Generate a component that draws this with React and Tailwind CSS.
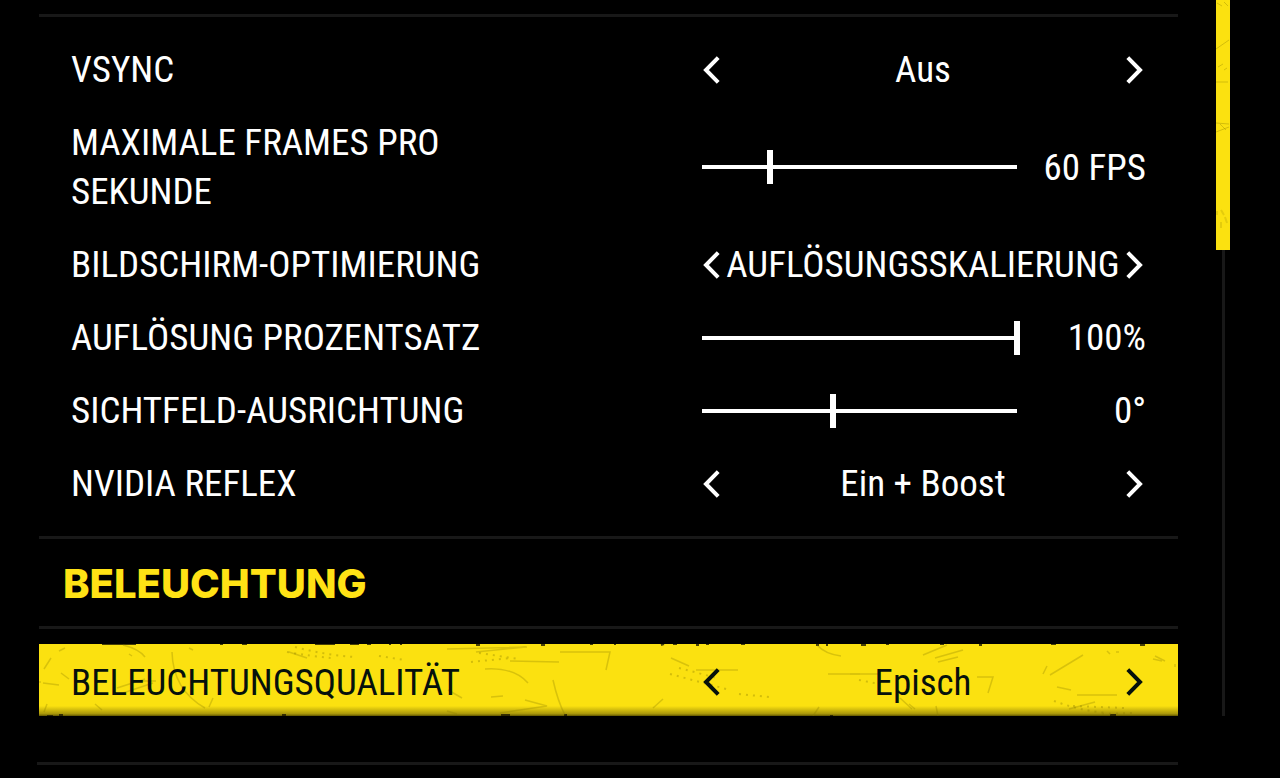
import { useId, useState } from "react";

const Chevron = ({ flip }) => (
  <svg
    viewBox="0 0 18 28"
    className={flip ? "h-7 w-[18px] rotate-180" : "h-7 w-[18px]"}
    fill="none"
    stroke="currentColor"
    strokeWidth="4"
    strokeLinejoin="miter"
    aria-hidden="true"
  >
    <path d="M16.2 1.6 L4 14 L16.2 26.4" />
  </svg>
);

const Divider = () => <hr className="h-[3px] border-0 bg-[#181818]" />;

// Worn paint over the highlighted row
const RowScratches = () => (
  <svg
    viewBox="0 0 1139 72"
    preserveAspectRatio="none"
    className="pointer-events-none absolute inset-0 h-full w-full"
    fill="none"
    aria-hidden="true"
  >
    <g stroke="#1d1900" strokeWidth="2" opacity="0.8">
      <path d="M63 0H97M181 0h3M203 0h5M276 0h20M311 0h9M328 0h4M350 0h2M361 0h2M437 1h4M502 1h4M551 0h3M575 0h2M622 1l3 -1M634 0h4M657 1h3M667 0h3M702 0h4M777 1h3M787 1h2M822 1h5M847 0h3M901 0h4M940 1h3M1012 0h5M1101 1h5" />
      <path d="M8 72h6M20 71h4M243 71h4M462 71h9M525 71h3M791 72h3M1071 71h6" />
    </g>
    <g stroke="#8a7c00" strokeWidth="1.5" opacity="0.3">
      <path d="M84 1Q100 5 106 13M5 25L12 14M20 7l6 -3M0 38h2M4 39l16 2M22 29l8 6M8 60l-3 8M56 60l7 6M90 10l3 2M150 4l4 2" />
      <path d="M133 8Q134 46 166 64M170 63l4 -9M78 44l28 -9M84 49l30 -10M92 37h25M250 8l18 6M409 46l14 8M408 67l10 3" />
      <path d="M408 5L488 3M437 8l50 -5M471 17L520 18M521 8H571L567 26M446 25Q475 23 489 39M486 56L508 62L461 69M514 36Q519 58 526 71M452 53l12 -1" />
      <path d="M632 14l18 8M789 30H821M778 1q8 9 24 11M774 72l6 -9M657 26h42M614 64l10 -9M870 60l6 5M897 62l2 10" />
      <path d="M884 11L908 1M896 14l28 -8M899 18l20 -5M1011 31L1044 11M1004 30l4 -8M938 33H954L949 49M811 30h30M861 54l12 11M1116 12l10 5M1114 15l9 2M1068 7l3 3M1077 8h3" />
      <path d="M1038 51h40M1018 43l14 3M1030 65l26 -7M1136 20v3" />
    </g>
    <g stroke="#8a7c00" strokeWidth="2" strokeDasharray="2 5" opacity="0.35">
      <path d="M248 8q24 4 44 6M256 3q30 8 60 10M440 9l40 6M432 18l40 -4M631 30l60 16M640 24l38 10M1015 57q24 9 52 12M1034 62l52 2M820 36l20 4M700 50l30 3M340 12l26 4M1063 70l30 -1" />
    </g>
  </svg>
);

const ThumbScratches = () => (
  <svg
    viewBox="0 0 14 250"
    className="h-full w-full"
    preserveAspectRatio="none"
    fill="none"
    stroke="#8a7a00"
    aria-hidden="true"
  >
    <path opacity="0.35" d="M1 3l5 3M8 2l4 4M0 49L13 40M2 67l5 -3M8 70l3 -2M0 82H12M0 123L13 124M0 132L13 127M4 124l6 6" />
    <path opacity="0.2" strokeWidth="2" d="M5 210l3 5M9 217l2 6M5 222v6M1 211v4" />
  </svg>
);

const Selector = ({ id, options }) => {
  const [index, setIndex] = useState(0);
  const step = (delta) =>
    setIndex((index + delta + options.length) % options.length);

  return (
    <div
      role="group"
      aria-labelledby={id}
      className="flex w-full items-center justify-between pr-[2px]"
    >
      <button type="button" aria-label="Zurück" onClick={() => step(-1)}>
        <Chevron />
      </button>
      <output className="flex min-w-0 flex-1 justify-center whitespace-nowrap">
        {options[index]}
      </output>
      <button type="button" aria-label="Weiter" onClick={() => step(1)}>
        <Chevron flip />
      </button>
    </div>
  );
};

const Slider = ({ id, min, max, initial, unit }) => {
  const [value, setValue] = useState(initial);

  return (
    <div className="flex w-full items-center">
      {/* The line is painted here so the handle can overhang both ends */}
      <div className="flex w-[71%] items-center bg-[linear-gradient(white,white)] bg-[length:100%_4px] bg-center bg-no-repeat">
        <input
          type="range"
          aria-labelledby={id}
          min={min}
          max={max}
          value={value}
          onChange={(e) => setValue(Number(e.target.value))}
          className="-mx-[3px] h-[34px] w-[calc(100%+6px)] shrink-0 appearance-none bg-transparent [&::-webkit-slider-thumb]:h-[34px] [&::-webkit-slider-thumb]:w-[6px] [&::-webkit-slider-thumb]:appearance-none [&::-webkit-slider-thumb]:bg-white"
        />
      </div>
      <output className="flex-1 whitespace-nowrap text-right">
        {value}
        {unit}
      </output>
    </div>
  );
};

const Row = ({ label, active, children }) => {
  const id = useId();

  return (
    <div
      className={
        active
          ? "relative flex min-h-[72px] items-center justify-between bg-[#fbe110] bg-[linear-gradient(to_bottom,transparent_86%,#a8960a_97%,#5e5400)] px-8 pt-1 text-[#06110c]"
          : "flex min-h-[73px] items-center justify-between px-8 py-3"
      }
    >
      {active && <RowScratches />}
      <span id={id} className="relative w-[40%]">
        {label}
      </span>
      <div className="relative flex w-[444px] max-w-[45%]">{children(id)}</div>
    </div>
  );
};

const settings = [
  { label: "VSYNC", options: ["Aus", "Ein"] },
  {
    label: "MAXIMALE FRAMES PRO SEKUNDE",
    slider: { min: 30, max: 170, initial: 60, unit: " FPS" },
  },
  {
    label: "BILDSCHIRM-OPTIMIERUNG",
    options: ["AUFLÖSUNGSSKALIERUNG", "Aus"],
  },
  {
    label: "AUFLÖSUNG PROZENTSATZ",
    slider: { min: 50, max: 100, initial: 100, unit: "%" },
  },
  {
    label: "SICHTFELD-AUSRICHTUNG",
    slider: { min: -20, max: 28, initial: 0, unit: "°" },
  },
  { label: "NVIDIA REFLEX", options: ["Ein + Boost", "Ein", "Aus"] },
];

const App = () => (
  <main className="min-h-screen bg-black font-['Roboto_Condensed','Liberation_Sans_Narrow',sans-serif] text-[37px] leading-[49px] text-white">
    <div className="flex pl-[39px] pr-[50px]">
      <div className="min-w-0 flex-1 pt-[14px]">
        <Divider />
        <section className="py-4">
          {settings.map(({ label, options, slider }) => (
            <Row key={label} label={label}>
              {(id) =>
                slider ? (
                  <Slider id={id} {...slider} />
                ) : (
                  <Selector id={id} options={options} />
                )
              }
            </Row>
          ))}
        </section>
        <Divider />
        <section>
          <h2 className="px-6 pb-[18px] pt-5 font-['Inter',sans-serif] text-[40px] font-extrabold text-[#ffe215]">
            BELEUCHTUNG
          </h2>
          <Divider />
          <div className="pt-[15px]">
            <Row label="BELEUCHTUNGSQUALITÄT" active>
              {(id) => (
                <Selector id={id} options={["Episch", "Hoch", "Mittel"]} />
              )}
            </Row>
          </div>
        </section>
      </div>

      {/* Scrollbar */}
      <div className="ml-[38px] flex w-[14px] flex-col items-center">
        <div className="h-[250px] w-full bg-[#fbe110]">
          <ThumbScratches />
        </div>
        <div className="w-[3px] flex-1 bg-[#181818]" />
      </div>
    </div>

    <div className="pl-[37px] pr-[102px] pt-[46px]">
      <Divider />
    </div>
  </main>
);

export default App;
